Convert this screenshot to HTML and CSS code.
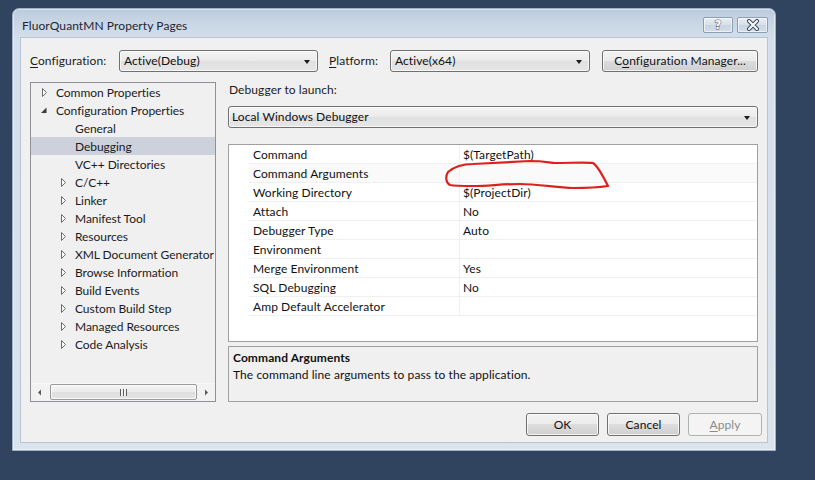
FILE: index.html
```html
<!DOCTYPE html>
<html lang="en">
<head>
<meta charset="utf-8">
<title>FluorQuantMN Property Pages</title>
<link rel="stylesheet" href="styles.css">
</head>
<body>
<div class="window">
  <div class="titlebar">
    <span class="title">FluorQuantMN Property Pages</span>
    <div class="caption-btns">
      <span class="cap help">?</span>
      <span class="cap close">
        <svg width="14" height="12" viewBox="0 0 14 12">
          <path d="M3 2 L11 10 M11 2 L3 10" stroke="#3d4b60" stroke-width="4" stroke-linecap="round"/>
          <path d="M3 2 L11 10 M11 2 L3 10" stroke="#ffffff" stroke-width="2" stroke-linecap="round"/>
        </svg>
      </span>
    </div>
  </div>

  <div class="client">
    <div class="config-row">
      <span class="lbl lbl-config"><u>C</u>onfiguration:</span>
      <div class="combo combo-config"><span>Active(Debug)</span><span class="arrow"></span></div>
      <span class="lbl lbl-platform"><u>P</u>latform:</span>
      <div class="combo combo-platform"><span>Active(x64)</span><span class="arrow"></span></div>
      <span class="btn btn-cm">C<u>o</u>nfiguration Manager...</span>
    </div>

    <div class="main">
      <div class="tree">
        <ul class="tree-list">
          <li class="node l0"><span class="exp"><svg width="16" height="18" viewBox="0 0 16 18"><path d="M6.5 5.5 L10.5 9.5 L6.5 13.5 Z" fill="#fff" stroke="#6b6b6b" stroke-width="1"/></svg></span><span class="txt">Common Properties</span></li>
          <li class="node l0"><span class="exp"><svg width="16" height="18" viewBox="0 0 16 18"><path d="M10.5 6.5 L10.5 12 L5 12 Z" fill="#3a3a3a"/></svg></span><span class="txt">Configuration Properties</span></li>
          <li class="node l1"><span class="exp"></span><span class="txt">General</span></li>
          <li class="node l1 selected"><span class="exp"></span><span class="txt">Debugging</span></li>
          <li class="node l1"><span class="exp"></span><span class="txt">VC++ Directories</span></li>
          <li class="node l1"><span class="exp"><svg width="16" height="18" viewBox="0 0 16 18"><path d="M6.5 5.5 L10.5 9.5 L6.5 13.5 Z" fill="#fff" stroke="#6b6b6b" stroke-width="1"/></svg></span><span class="txt">C/C++</span></li>
          <li class="node l1"><span class="exp"><svg width="16" height="18" viewBox="0 0 16 18"><path d="M6.5 5.5 L10.5 9.5 L6.5 13.5 Z" fill="#fff" stroke="#6b6b6b" stroke-width="1"/></svg></span><span class="txt">Linker</span></li>
          <li class="node l1"><span class="exp"><svg width="16" height="18" viewBox="0 0 16 18"><path d="M6.5 5.5 L10.5 9.5 L6.5 13.5 Z" fill="#fff" stroke="#6b6b6b" stroke-width="1"/></svg></span><span class="txt">Manifest Tool</span></li>
          <li class="node l1"><span class="exp"><svg width="16" height="18" viewBox="0 0 16 18"><path d="M6.5 5.5 L10.5 9.5 L6.5 13.5 Z" fill="#fff" stroke="#6b6b6b" stroke-width="1"/></svg></span><span class="txt">Resources</span></li>
          <li class="node l1"><span class="exp"><svg width="16" height="18" viewBox="0 0 16 18"><path d="M6.5 5.5 L10.5 9.5 L6.5 13.5 Z" fill="#fff" stroke="#6b6b6b" stroke-width="1"/></svg></span><span class="txt">XML Document Generator</span></li>
          <li class="node l1"><span class="exp"><svg width="16" height="18" viewBox="0 0 16 18"><path d="M6.5 5.5 L10.5 9.5 L6.5 13.5 Z" fill="#fff" stroke="#6b6b6b" stroke-width="1"/></svg></span><span class="txt">Browse Information</span></li>
          <li class="node l1"><span class="exp"><svg width="16" height="18" viewBox="0 0 16 18"><path d="M6.5 5.5 L10.5 9.5 L6.5 13.5 Z" fill="#fff" stroke="#6b6b6b" stroke-width="1"/></svg></span><span class="txt">Build Events</span></li>
          <li class="node l1"><span class="exp"><svg width="16" height="18" viewBox="0 0 16 18"><path d="M6.5 5.5 L10.5 9.5 L6.5 13.5 Z" fill="#fff" stroke="#6b6b6b" stroke-width="1"/></svg></span><span class="txt">Custom Build Step</span></li>
          <li class="node l1"><span class="exp"><svg width="16" height="18" viewBox="0 0 16 18"><path d="M6.5 5.5 L10.5 9.5 L6.5 13.5 Z" fill="#fff" stroke="#6b6b6b" stroke-width="1"/></svg></span><span class="txt">Managed Resources</span></li>
          <li class="node l1"><span class="exp"><svg width="16" height="18" viewBox="0 0 16 18"><path d="M6.5 5.5 L10.5 9.5 L6.5 13.5 Z" fill="#fff" stroke="#6b6b6b" stroke-width="1"/></svg></span><span class="txt">Code Analysis</span></li>
        </ul>
        <div class="hscroll">
          <span class="sb-arrow"><svg width="17" height="17" viewBox="0 0 17 17"><path d="M10 5.5 L10 11.5 L7 8.5 Z" fill="#5a5a5a"/></svg></span>
          <div class="sb-track">
            <div class="sb-thumb"><span class="grip"></span></div>
          </div>
          <span class="sb-arrow"><svg width="17" height="17" viewBox="0 0 17 17"><path d="M7 5.5 L7 11.5 L10 8.5 Z" fill="#5a5a5a"/></svg></span>
        </div>
      </div>

      <div class="right">
        <div class="lbl-launch">Debugger to launch:</div>
        <div class="combo combo-debugger"><span>Local Windows Debugger</span><span class="arrow"></span></div>
        <div class="grid">
          <div class="row"><span class="gut"></span><span class="name">Command</span><span class="val">$(TargetPath)</span></div>
          <div class="row active"><span class="gut"></span><span class="name">Command Arguments</span><span class="val"></span></div>
          <div class="row"><span class="gut"></span><span class="name">Working Directory</span><span class="val">$(ProjectDir)</span></div>
          <div class="row"><span class="gut"></span><span class="name">Attach</span><span class="val">No</span></div>
          <div class="row"><span class="gut"></span><span class="name">Debugger Type</span><span class="val">Auto</span></div>
          <div class="row"><span class="gut"></span><span class="name">Environment</span><span class="val"></span></div>
          <div class="row"><span class="gut"></span><span class="name">Merge Environment</span><span class="val">Yes</span></div>
          <div class="row"><span class="gut"></span><span class="name">SQL Debugging</span><span class="val">No</span></div>
          <div class="row"><span class="gut"></span><span class="name">Amp Default Accelerator</span><span class="val"></span></div>
        </div>
        <div class="desc">
          <div class="desc-title">Command Arguments</div>
          <div class="desc-text">The command line arguments to pass to the application.</div>
        </div>
      </div>
    </div>

    <div class="buttons">
      <span class="btn btn-dlg">OK</span>
      <span class="btn btn-dlg">Cancel</span>
      <span class="btn btn-dlg disabled"><u>A</u>pply</span>
    </div>
  </div>
</div>

<svg class="annotation" width="815" height="480" viewBox="0 0 815 480">
  <path d="M448,172 C455,166 465,164 473,164 L530,161 C545,161 550,163 555,163 C570,163 585,162 593,163 C598,166 604,178 608,186 C595,188 585,188 573,188 C555,187 535,184 520,184 C500,184 490,186 473,186 C465,186 455,186 450,185 C446,183 445,177 448,172 Z" fill="none" stroke="#e0201e" stroke-width="2.2" stroke-linejoin="round"/>
</svg>
</body>
</html>
```

FILE: styles.css
```css
* { box-sizing: border-box; }

html, body {
  margin: 0;
  padding: 0;
}

body {
  width: 815px;
  height: 480px;
  background: #31445f;
  padding: 8px 0 0 12px;
  font-family: "Lato", "Open Sans", sans-serif;
  font-size: 12px;
  letter-spacing: 0.08px;
  color: #1b1b1b;
  position: relative;
  overflow: hidden;
}

u { text-decoration: underline; text-underline-offset: 2px; }

.window {
  width: 764px;
  height: 443px;
  border-radius: 7px 7px 0 0;
  background: linear-gradient(#bccbdc 0px, #c9d6e5 14px, #d4dfeb 30px, #dae4ef 100%);
  border: 1px solid #9fb1c6;
  box-shadow: inset 0 0 0 1px rgba(255,255,255,0.45);
  display: flex;
  flex-direction: column;
  padding: 0 7px 7px 7px;
}

.titlebar {
  height: 28px;
  display: flex;
  justify-content: space-between;
  align-items: flex-start;
  flex: none;
}

.title {
  padding: 9px 0 0 2px;
  font-size: 12px;
  line-height: 16px;
  color: #1e2633;
}

.caption-btns {
  display: flex;
  gap: 4px;
  margin-top: 8px;
}

.cap {
  width: 30px;
  height: 16px;
  border: 1px solid #8d9eb4;
  border-radius: 2px;
  background: linear-gradient(#e9eff6, #d5dfea 50%, #c9d5e3 51%, #d3dde9);
  display: flex;
  align-items: center;
  justify-content: center;
  box-shadow: inset 0 0 0 1px rgba(255,255,255,0.6);
}

.cap.close { width: 31px; }

.cap.help {
  font-family: "DejaVu Sans", sans-serif;
  font-weight: bold;
  font-size: 12px;
  line-height: 14px;
  color: #ffffff;
  -webkit-text-stroke: 0.9px #3d4b60;
  paint-order: stroke fill;
}

.client {
  flex: 1;
  background: #f0f0f0;
  border: 1px solid #b6c4d4;
  display: flex;
  flex-direction: column;
  padding: 12px 9px 0 9px;
}

/* config row */
.config-row {
  display: flex;
  align-items: center;
  height: 22px;
}

.lbl { line-height: 16px; }
.lbl-config { width: 89px; }
.lbl-platform { width: 61px; margin-left: 11px; }

.combo {
  height: 22px;
  border: 1px solid #707070;
  border-radius: 3px;
  background: linear-gradient(#f3f3f3 0%, #ebebeb 49%, #e0e0e0 50%, #e6e6e6 100%);
  box-shadow: inset 0 0 0 1px rgba(255,255,255,0.7);
  display: flex;
  align-items: center;
  justify-content: space-between;
  padding: 0 7px 0 4px;
  line-height: 16px;
  color: #101010;
}

.arrow {
  width: 0;
  height: 0;
  border-left: 3.5px solid transparent;
  border-right: 3.5px solid transparent;
  border-top: 4px solid #1a1a1a;
  margin-top: 2px;
}

.combo-config { width: 199px; }
.combo-platform { width: 200px; }
.combo-debugger { width: 530px; padding-left: 3px; }

.btn {
  height: 23px;
  border: 1px solid #707070;
  border-radius: 3px;
  background: linear-gradient(#f2f2f2 0%, #ebebeb 49%, #dddddd 50%, #cfcfcf 100%);
  box-shadow: inset 0 0 0 1px rgba(255,255,255,0.75);
  display: flex;
  align-items: center;
  justify-content: center;
  line-height: 16px;
  color: #121212;
}

.btn-cm { width: 156px; height: 22px; margin-left: 12px; }

/* main area */
.main {
  display: flex;
  gap: 12px;
  margin-top: 10px;
  height: 320px;
}

.tree {
  width: 186px;
  height: 320px;
  border: 1px solid #8e9298;
  background: #f0f0f0;
  display: flex;
  flex-direction: column;
}

.tree-list {
  list-style: none;
  margin: 0;
  padding: 0;
  flex: 1;
  overflow: hidden;
}

.node {
  height: 18px;
  display: flex;
  align-items: center;
  white-space: nowrap;
  color: #1b1b1b;
  letter-spacing: -0.05px;
}

.node.l0 { padding-left: 5px; }
.node.l1 { padding-left: 24px; }

.node.selected { background: #cdd1db; }

.exp {
  width: 16px;
  height: 18px;
  flex: none;
  display: block;
}

.exp svg { display: block; }

.txt { margin-left: 4px; margin-top: 2px; line-height: 16px; }

.hscroll {
  height: 18px;
  display: flex;
  align-items: stretch;
  background: #f2f2f2;
  border-top: 1px solid #f7f7f7;
}

.sb-arrow {
  width: 17px;
  flex: none;
  display: flex;
  align-items: center;
  justify-content: center;
}

.sb-track {
  flex: 1;
  padding: 0 1px;
  display: flex;
  align-items: stretch;
}

.sb-thumb {
  flex: 1;
  margin: 0 0 1px 1px;
  border: 1px solid #9a9a9a;
  border-radius: 2px;
  background: linear-gradient(#f4f4f4, #ebebeb 50%, #dedede 51%, #e4e4e4);
  box-shadow: inset 0 0 0 1px rgba(255,255,255,0.7);
  display: flex;
  align-items: center;
  justify-content: center;
}

.grip {
  width: 7px;
  height: 7px;
  background: repeating-linear-gradient(90deg, #5b5b5b 0 1px, #f2f2f2 1px 3px);
}

/* right column */
.right {
  width: 530px;
  display: flex;
  flex-direction: column;
}

.lbl-launch {
  line-height: 15px;
  height: 15px;
  margin-bottom: 9px;
  padding-left: 1px;
}

.grid {
  margin-top: 16px;
  height: 198px;
  border: 1px solid #a0a0a0;
  background: #ffffff;
}

.row {
  height: 19px;
  display: flex;
}

.gut {
  width: 20px;
  flex: none;
  background: #ffffff;
}

.name {
  width: 210px;
  flex: none;
  padding: 2px 0 0 4px;
  line-height: 16px;
  border-bottom: 1px solid #f0f0f0;
  color: #111;
}

.val {
  flex: 1;
  padding: 2px 0 0 3px;
  line-height: 16px;
  border-left: 1px solid #f0f0f0;
  border-bottom: 1px solid #f0f0f0;
  color: #111;
}

.row.active .name,
.row.active .val { background: #fafafa; }

.desc {
  margin-top: 4px;
  height: 56px;
  border: 1px solid #a0a0a0;
  background: #f0f0f0;
  padding: 2px 4px 0 4px;
  line-height: 17px;
  color: #111;
}

.desc-title { font-weight: bold; }

/* dialog buttons */
.buttons {
  display: flex;
  justify-content: flex-end;
  gap: 8px;
  margin-top: 11px;
  margin-right: -4px;
}

.btn-dlg { width: 73px; }
.btn-dlg.disabled {
  width: 74px;
  border-color: #adb2b5;
  background: #f4f4f4;
  box-shadow: none;
  color: #8a8a8a;
}

.annotation {
  position: absolute;
  left: 0;
  top: 0;
  pointer-events: none;
}
```
